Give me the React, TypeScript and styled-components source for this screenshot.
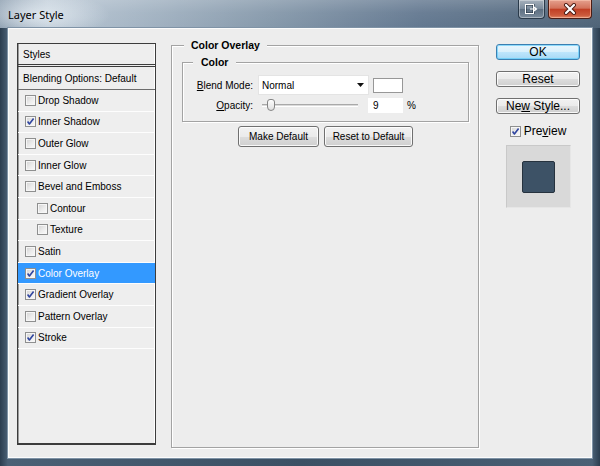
import { FC } from 'react'
import styled, { createGlobalStyle } from 'styled-components'

const GlobalStyle = createGlobalStyle`
  html, body {
    margin: 0;
    padding: 0;
    background: #2e4154;
  }
  body {
    font-family: 'Liberation Sans', Arial, sans-serif;
    font-size: 10px;
    color: #000;
  }
`

interface StyleItem {
  label: string
  checked: boolean
  indent?: boolean
  selected?: boolean
}

const styleItems: StyleItem[] = [
  { label: 'Drop Shadow', checked: false },
  { label: 'Inner Shadow', checked: true },
  { label: 'Outer Glow', checked: false },
  { label: 'Inner Glow', checked: false },
  { label: 'Bevel and Emboss', checked: false },
  { label: 'Contour', checked: false, indent: true },
  { label: 'Texture', checked: false, indent: true },
  { label: 'Satin', checked: false },
  { label: 'Color Overlay', checked: true, selected: true },
  { label: 'Gradient Overlay', checked: true },
  { label: 'Pattern Overlay', checked: false },
  { label: 'Stroke', checked: true }
]

const opacity = 9

const CheckBox: FC<{ checked: boolean }> = ({ checked }) => (
  <CheckFrame>
    {checked && (
      <svg width="9" height="9" viewBox="0 0 9 9">
        <path d="M1.6 4.6 L3.4 7 L7.6 1.4" fill="none" stroke="#2f45a0" strokeWidth="1.6" strokeLinejoin="round" />
      </svg>
    )}
  </CheckFrame>
)

const App: FC = () => {
  // thumb position along the slider track
  const thumbLeft = Math.round((opacity / 100) * 88) + 1

  return (
    <>
      <GlobalStyle />
      <Window>
        <TitleBar>
          <Title>Layer Style</Title>
          <CaptionButtons>
            <CaptionButton>
              <svg width="13" height="10" viewBox="0 0 13 10">
                <rect x="0.5" y="0.5" width="8" height="9" fill="none" stroke="#1d2b38" strokeWidth="2" />
                <rect x="0.5" y="0.5" width="8" height="9" fill="none" stroke="#fff" strokeWidth="1" />
                <path d="M5 5 H11 M9 3 L11.5 5 L9 7" fill="none" stroke="#fff" strokeWidth="1.2" />
              </svg>
            </CaptionButton>
            <CloseButton>
              <svg width="14" height="12" viewBox="0 0 14 12">
                <path d="M3 2 L11 10 M11 2 L3 10" stroke="#4a1a12" strokeWidth="4" strokeLinecap="round" />
                <path d="M3 2 L11 10 M11 2 L3 10" stroke="#fff" strokeWidth="2.2" strokeLinecap="round" />
              </svg>
            </CloseButton>
          </CaptionButtons>
        </TitleBar>

        <Frame>
          <Client>
            <StylesPanel>
              <PanelHeader>Styles</PanelHeader>
              <BlendingRow>Blending Options: Default</BlendingRow>
              {styleItems.map((item) => (
                <StyleRow key={item.label} $indent={item.indent} $selected={item.selected}>
                  <CheckBox checked={item.checked} />
                  <span>{item.label}</span>
                </StyleRow>
              ))}
            </StylesPanel>

            <GroupBox>
              <Legend>Color Overlay</Legend>
              <InnerGroup>
                <InnerLegend>Color</InnerLegend>
                <FormRow $height={20}>
                  <FieldLabel>
                    <u>B</u>lend Mode:
                  </FieldLabel>
                  <Select>
                    <span>Normal</span>
                    <svg width="7" height="4" viewBox="0 0 7 4">
                      <path d="M0 0 H7 L3.5 4 Z" fill="#111" />
                    </svg>
                  </Select>
                  <Swatch />
                </FormRow>
                <FormRow $height={15} $gap={3}>
                  <FieldLabel>
                    <u>O</u>pacity:
                  </FieldLabel>
                  <Slider>
                    <Track />
                    <Thumb style={{ left: thumbLeft }} />
                  </Slider>
                  <NumberField>{opacity}</NumberField>
                  <Unit>%</Unit>
                </FormRow>
              </InnerGroup>
              <ButtonRow>
                <PushButton $width={81} $height={21}>
                  Make Default
                </PushButton>
                <PushButton $width={89} $height={21}>
                  Reset to Default
                </PushButton>
              </ButtonRow>
            </GroupBox>

            <ActionColumn>
              <PushButton $width={84} $height={16} $big $primary>
                OK
              </PushButton>
              <PushButton $width={84} $height={16} $big>
                Reset
              </PushButton>
              <PushButton $width={84} $height={16} $big>
                Ne<u>w</u> Style...
              </PushButton>
              <PreviewToggle>
                <CheckBox checked />
                <span>
                  Pre<u>v</u>iew
                </span>
              </PreviewToggle>
              <PreviewBox>
                <PreviewChip />
              </PreviewBox>
            </ActionColumn>
          </Client>
        </Frame>
      </Window>
    </>
  )
}

const Window = styled.div`
  width: 600px;
  height: 466px;
  display: flex;
  flex-direction: column;
  overflow: hidden;
  background: linear-gradient(90deg, #2b3d4f 0%, #4a6075 1.3%, #3b5064 50%, #4a6075 98.7%, #2b3d4f 100%);
`

const TitleBar = styled.div`
  height: 28px;
  flex: none;
  display: flex;
  align-items: flex-start;
  padding-left: 8px;
  background:
    linear-gradient(180deg, rgba(255, 255, 255, 0.18) 0%, rgba(255, 255, 255, 0.05) 45%, rgba(0, 0, 0, 0) 100%),
    radial-gradient(ellipse 70px 22px at 40px 15px, rgba(225, 233, 240, 0.9), rgba(225, 233, 240, 0) 100%),
    linear-gradient(90deg, #8194a7 0%, #b8c6d3 8%, #a6b6c5 22%, #8699ab 45%, #637890 70%, #4f6478 100%);
`

const Title = styled.div`
  margin-top: 7px;
  font-family: 'Noto Sans', 'Open Sans', sans-serif;
  font-size: 11px;
  line-height: 16px;
  color: #000;
`

const CaptionButtons = styled.div`
  margin-left: auto;
  margin-right: 8px;
  display: flex;
  gap: 3px;
`

const CaptionButton = styled.div`
  width: 27px;
  height: 19px;
  box-sizing: border-box;
  display: flex;
  align-items: center;
  justify-content: center;
  border: 1px solid #2a3a4a;
  border-top: none;
  border-radius: 0 0 4px 4px;
  background: linear-gradient(180deg, rgba(255, 255, 255, 0.35) 0%, rgba(255, 255, 255, 0.12) 50%, rgba(0, 0, 0, 0.08) 51%, rgba(255, 255, 255, 0.2) 100%);
  box-shadow: inset 0 0 0 1px rgba(255, 255, 255, 0.35);
`

const CloseButton = styled(CaptionButton)`
  width: 44px;
  border-color: #4b1d15;
  background: linear-gradient(180deg, #e5a08e 0%, #d3735c 45%, #c13f25 52%, #cc5a3c 85%, #e28a68 100%);
  box-shadow: inset 0 0 0 1px rgba(255, 210, 190, 0.5);
`

const Frame = styled.div`
  flex: 1;
  display: flex;
  padding: 0 8px 8px;
  min-height: 0;
`

const Client = styled.div`
  flex: 1;
  display: flex;
  align-items: flex-start;
  box-sizing: border-box;
  padding: 10px 0 0 8px;
  background: #ededed;
  border: 1px solid #fbfbfb;
  box-shadow: 0 0 0 1px #7f93a6;
`

const StylesPanel = styled.div`
  width: 139px;
  height: 402px;
  margin-top: 4px;
  flex: none;
  box-sizing: border-box;
  display: flex;
  flex-direction: column;
  border: 1px solid #3c3c3c;
  border-bottom-width: 2px;
  background: #eeeeee;
  box-shadow: inset 1px 0 0 #9a9a9a, inset -1px 0 0 #fff;
`

const PanelHeader = styled.div`
  height: 23px;
  flex: none;
  box-sizing: border-box;
  display: flex;
  align-items: center;
  padding-left: 5px;
  border-bottom: 3px double #3c3c3c;
`

const BlendingRow = styled(PanelHeader)`
  height: 23px;
  border-bottom: 1px solid #6c6c6c;
`

const StyleRow = styled.div<{ $indent?: boolean; $selected?: boolean }>`
  height: 21.6px;
  flex: none;
  box-sizing: border-box;
  display: flex;
  align-items: center;
  gap: 2px;
  padding-left: ${(p) => (p.$indent ? 19 : 7)}px;
  border-bottom: 1px solid #fdfdfd;
  background: ${(p) => (p.$selected ? '#3399ff' : 'transparent')};
  color: ${(p) => (p.$selected ? '#fff' : '#000')};
`

const CheckFrame = styled.span`
  width: 11px;
  height: 11px;
  flex: none;
  box-sizing: border-box;
  display: inline-flex;
  align-items: center;
  justify-content: center;
  border: 1px solid #8e8f8f;
  background: linear-gradient(135deg, #d2d2d2 0%, #ececec 55%, #fafafa 100%);
  box-shadow: inset 0 0 0 1px #f6f6f6;
`

const GroupBox = styled.fieldset`
  width: 308px;
  height: 409px;
  margin: 0 0 0 15px;
  flex: none;
  box-sizing: border-box;
  padding: 4px 9px 0 10px;
  border: 1px solid #a3a3a3;
  box-shadow: inset 1px 1px 0 #fff, 1px 1px 0 #fff;
`

const Legend = styled.legend`
  margin-left: 2px;
  padding: 0 7px;
  background: #ededed;
  font-size: 10.5px;
  font-weight: bold;
  line-height: 13px;
`

const InnerGroup = styled.fieldset`
  margin: 0;
  padding: 6px 0 8px;
  min-width: 0;
  border: 1px solid #a3a3a3;
  box-shadow: inset 1px 1px 0 #fff, 1px 1px 0 #fff;
`

const InnerLegend = styled(Legend)`
  margin-left: 10px;
  padding: 0 8px;
`

const FormRow = styled.div<{ $height: number; $gap?: number }>`
  height: ${(p) => p.$height}px;
  margin-top: ${(p) => p.$gap ?? 0}px;
  display: flex;
  align-items: center;
`

const FieldLabel = styled.label`
  width: 70px;
  margin-right: 5px;
  flex: none;
  text-align: right;
  white-space: nowrap;
`

const Select = styled.div`
  width: 111px;
  height: 20px;
  flex: none;
  box-sizing: border-box;
  display: flex;
  align-items: center;
  justify-content: space-between;
  padding: 0 4px 0 3px;
  background: #fff;
  border: 1px solid #e4e4e4;
`

const Swatch = styled.div`
  width: 30px;
  height: 15px;
  margin-left: 4px;
  flex: none;
  box-sizing: border-box;
  background: #fff;
  border: 1px solid #979797;
`

const Slider = styled.div`
  position: relative;
  width: 106px;
  height: 15px;
  flex: none;
  box-sizing: border-box;
  display: flex;
  align-items: center;
  padding: 0 6px 0 4px;
`

const Track = styled.div`
  flex: 1;
  height: 3px;
  box-sizing: border-box;
  border-top: 1px solid #a9a9a9;
  border-bottom: 1px solid #fff;
  background: #dadada;
`

const Thumb = styled.div`
  position: absolute;
  top: 1px;
  width: 8px;
  height: 12px;
  box-sizing: border-box;
  border: 1px solid #858585;
  border-radius: 3px 3px 4px 4px;
  background: linear-gradient(180deg, #fdfdfd, #e0e0e0);
`

const NumberField = styled.div`
  width: 35px;
  height: 15px;
  margin-left: 4px;
  flex: none;
  box-sizing: border-box;
  padding-left: 5px;
  display: flex;
  align-items: center;
  background: #fff;
`

const Unit = styled.span`
  margin-left: 4px;
`

const ButtonRow = styled.div`
  margin-top: 4px;
  display: flex;
  justify-content: center;
  gap: 5px;
`

const PushButton = styled.button<{ $width: number; $height: number; $big?: boolean; $primary?: boolean }>`
  width: ${(p) => p.$width}px;
  height: ${(p) => p.$height}px;
  flex: none;
  box-sizing: border-box;
  padding: 0;
  border: 1px solid ${(p) => (p.$primary ? '#3c7fb1' : '#707070')};
  border-radius: 3px;
  background: ${(p) =>
    p.$primary
      ? 'linear-gradient(180deg, #eaf6fd 0%, #d9f0fc 50%, #bee6fd 51%, #a7d9f5 100%)'
      : 'linear-gradient(180deg, #f2f2f2 0%, #ebebeb 50%, #dddddd 51%, #cfcfcf 100%)'};
  box-shadow: inset 0 0 0 1px ${(p) => (p.$primary ? 'rgba(80, 200, 250, 0.6)' : 'rgba(255, 255, 255, 0.85)')};
  font-family: 'Liberation Sans', Arial, sans-serif;
  font-size: ${(p) => (p.$big ? 12 : 10)}px;
  line-height: 1;
  color: #000;
`

const ActionColumn = styled.div`
  width: 84px;
  margin: 5px 0 0 17px;
  flex: none;
  display: flex;
  flex-direction: column;
  align-items: center;
  gap: 11px;
`

const PreviewToggle = styled.div`
  height: 14px;
  margin-top: -1px;
  display: flex;
  align-items: center;
  gap: 3px;
  font-size: 12px;
`

const PreviewBox = styled.div`
  width: 65px;
  height: 63px;
  margin-top: -4px;
  box-sizing: border-box;
  display: flex;
  align-items: center;
  justify-content: center;
  background: #d9d9d9;
  border: 1px solid #c9c9c9;
  border-right-color: #e6e6e6;
  border-bottom-color: #e6e6e6;
`

const PreviewChip = styled.div`
  width: 33px;
  height: 32px;
  box-sizing: border-box;
  border: 1px solid #26323e;
  border-radius: 2px;
  background: #3d5266;
`

export default App
